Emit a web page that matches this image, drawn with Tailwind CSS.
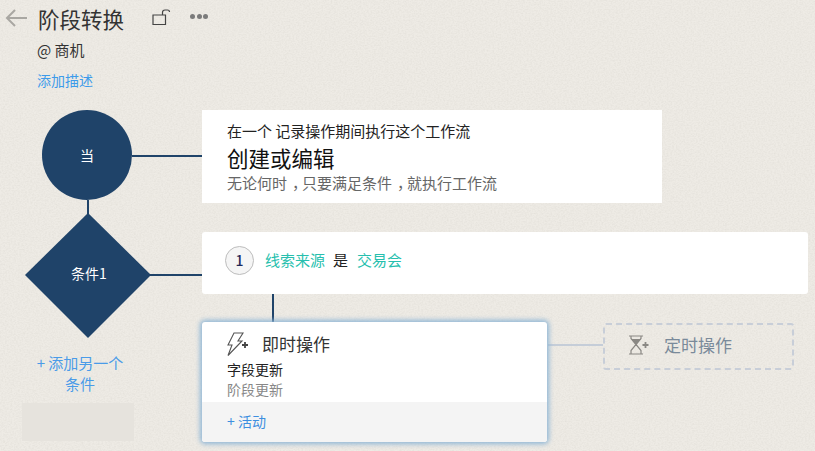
<!DOCTYPE html>
<html lang="zh">
<head>
  <meta charset="UTF-8">
  <title>阶段转换</title>
  <script src="https://cdn.jsdelivr.net/npm/@tailwindcss/browser@4"></script>
</head>
<body class="m-0 overflow-hidden bg-[#eeebe5] font-['Noto_Sans_CJK_SC','Liberation_Sans',sans-serif]">
  <div class="relative w-[815px] h-[451px] overflow-hidden">
    <!-- paper texture -->
    <svg class="absolute inset-0" width="815" height="451">
      <filter id="paper">
        <feTurbulence type="fractalNoise" baseFrequency="0.55 0.75" numOctaves="2" seed="4"/>
        <feColorMatrix values="0 0 0 0 0.55  0 0 0 0 0.53  0 0 0 0 0.48  0.4 0 0 0 -0.14"/>
      </filter>
      <rect width="815" height="451" filter="url(#paper)"/>
    </svg>

    <!-- header -->
    <div class="absolute left-[5px] top-[6px] flex items-start">
      <svg width="24" height="24" viewBox="0 0 24 24" fill="none" stroke="#a9a7a2" stroke-width="2">
        <path d="M22 12H2M10 4l-8 8 8 8"/>
      </svg>
      <div class="ml-[8px] -mt-[2px]">
        <div class="flex items-center pl-[1px]">
          <h1 class="text-[21.5px] leading-[30px] font-normal text-[#333]">阶段转换</h1>
          <svg width="19" height="17" viewBox="0 0 19 17" class="ml-[28px] -mt-[4px]" fill="none" stroke="#444" stroke-width="1.2">
            <path d="M1 6h12.500v9.500H1zM10.500 6V3.500A2.500 2.500 0 0 1 13 1h2.500a2 2 0 0 1 2 2"/>
          </svg>
          <div class="ml-[19px] -mt-[5px] flex gap-[1.5px]">
            <span class="w-[5px] h-[5px] rounded-full bg-[#7b7b7b]"></span>
            <span class="w-[5px] h-[5px] rounded-full bg-[#7b7b7b]"></span>
            <span class="w-[5px] h-[5px] rounded-full bg-[#7b7b7b]"></span>
          </div>
        </div>
        <p class="text-[15px] leading-[20px] mt-[6px] text-[#333]">@ 商机</p>
        <a class="block text-[14px] leading-[20px] mt-[10px] text-[#3d9bea]">添加描述</a>
      </div>
    </div>

    <!-- connectors -->
    <div class="absolute left-[132px] top-[155px] w-[70px] h-[2px] bg-[#1f4369]"></div>
    <div class="absolute left-[87px] top-[200px] w-[2px] h-[14px] bg-[#1f4369]"></div>
    <div class="absolute left-[150px] top-[274px] w-[52px] h-[2px] bg-[#1f4369]"></div>
    <div class="absolute left-[272px] top-[294px] w-[2px] h-[28px] bg-[#1f4369]"></div>
    <div class="absolute left-[548px] top-[344px] w-[55px] h-[2px] bg-[#c5cdd8]"></div>

    <!-- start node -->
    <div class="absolute left-[42px] top-[110px] w-[90px] h-[90px] rounded-full bg-[#1f4369] flex items-center justify-center text-white text-[14px]">当</div>

    <!-- condition node -->
    <svg class="absolute left-[25px] top-[213px]" width="126" height="126" viewBox="0 0 126 126">
      <path d="M63 0L126 62 63 125 0 62z" fill="#1f4369"/>
    </svg>
    <div class="absolute left-[26px] top-[213px] w-[126px] h-[121px] flex items-center justify-center text-white text-[14px]">条件1</div>

    <!-- add condition -->
    <div class="absolute left-[22px] top-[352px] w-[116px] text-center text-[15px] leading-[21px] text-[#4a9be8]">+ 添加另一个<br>条件</div>
    <div class="absolute left-[22px] top-[403px] w-[112px] h-[38px] bg-[#e6e3dd]"></div>

    <!-- trigger card -->
    <div class="absolute left-[202px] top-[110px] w-[460px] h-[93px] bg-white pl-[25px] pt-[11px]">
      <p class="text-[15px] leading-[20px] text-[#222]">在一个 记录操作期间执行这个工作流</p>
      <p class="text-[21.5px] leading-[30px] mt-[2px] text-[#111]">创建或编辑</p>
      <p class="text-[15px] leading-[20px] text-[#666]">无论何时<span class="pl-[5px] tracking-[-5px]">，</span>只要满足条件<span class="pl-[5px] tracking-[-5px]">，</span>就执行工作流</p>
    </div>

    <!-- criteria card -->
    <div class="absolute left-[202px] top-[232px] w-[606px] h-[62px] bg-white rounded-[3px] pl-[23px] flex items-center">
      <span class="w-[29px] h-[29px] rounded-full bg-[#f5f5f5] border border-[#bdbdbd] flex items-center justify-center text-[14px] font-medium text-[#1f2a5a] -mt-[6px]">1</span>
      <div class="flex items-center -mt-[6px] text-[15px]">
        <span class="ml-[11px] text-[#27bfae]">线索来源</span>
        <span class="ml-[8px] text-[15px] text-[#222]">是</span>
        <span class="ml-[9px] text-[#27bfae]">交易会</span>
      </div>
    </div>

    <!-- instant actions card -->
    <div class="absolute left-[202px] top-[322px] w-[345px] h-[120px] bg-white rounded-[3px] shadow-[0_0_5px_2px_#8fb6d6] flex flex-col overflow-hidden">
      <div class="flex-1 pl-[25px] pt-[7px]">
        <div class="flex items-center h-[30px]">
          <svg width="22" height="25" viewBox="0 0 22 25" fill="none" stroke="#555" stroke-width="1.1">
            <path d="M7 1h9l-5 8h4L1 23.500l4-10.500H1z"/>
            <path d="M18 10v6M15 13h6" stroke="#444" stroke-width="1.800"/>
          </svg>
          <span class="ml-[13px] text-[17px] text-[#333]">即时操作</span>
        </div>
        <p class="text-[14px] leading-[20px] text-[#222]">字段更新</p>
        <p class="text-[14px] leading-[20px] text-[#888]">阶段更新</p>
      </div>
      <div class="h-[40px] bg-[#f4f4f4] pl-[25px] pb-[2px] flex items-center text-[14px] text-[#3d8fe0]">+ 活动</div>
    </div>

    <!-- scheduled actions -->
    <div class="absolute left-[603px] top-[323px] w-[191px] h-[47px] rounded-[3px] border-2 border-dashed border-[#c8ced8] pl-[24px] pb-[3px] flex items-center">
      <svg width="20" height="20" viewBox="0 0 20 20" fill="none" stroke="#8a8884" stroke-width="1.2">
        <path d="M0 1h14M0 19h14M2 1v2.500l5 6-5 6V19M12 1v2.500l-5 6 5 6V19"/>
        <path d="M3.500 4.500h7L7 8.500z" fill="#8a8884"/>
        <path d="M16.500 7v6M13.500 10h6" stroke-width="1.800"/>
      </svg>
      <span class="ml-[15px] text-[17px] text-[#7a8a9a]">定时操作</span>
    </div>
  </div>
</body>
</html>
